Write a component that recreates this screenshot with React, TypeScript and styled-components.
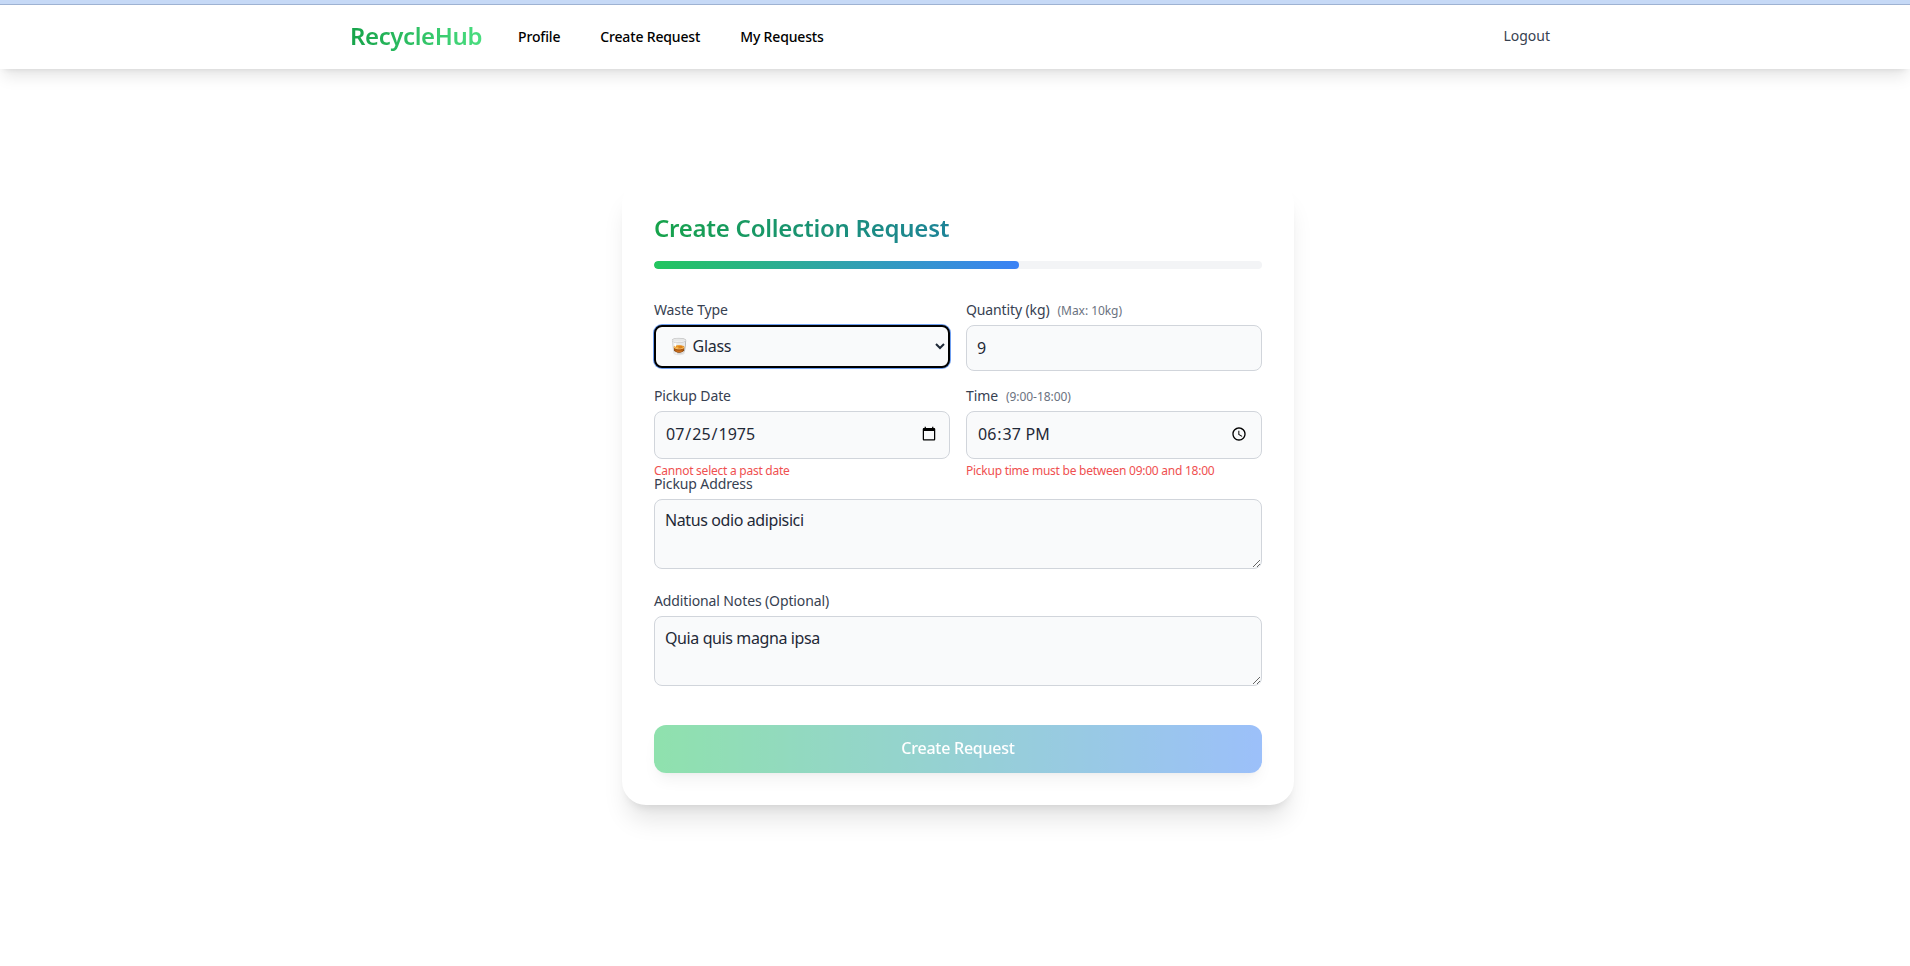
import React from "react";
import styled, { createGlobalStyle } from "styled-components";

const FONT = `"Noto Sans", "Open Sans", sans-serif`;

const Global = createGlobalStyle`
  html, body { margin: 0; padding: 0; background: #fff; }
  body { font-family: ${FONT}; color: #1f2937; }
  * { box-sizing: border-box; }
`;

const Page = styled.div`
  min-height: 966px;
  display: flex;
  flex-direction: column;
  overflow: hidden;
`;
const TopStrip = styled.div`
  height: 5px;
  background: #c6d9f6;
  border-bottom: 1px solid #9fb3d3;
`;
const Navbar = styled.nav`
  height: 64px;
  background: #fff;
  box-shadow: 0 10px 15px -3px rgba(0,0,0,.1), 0 4px 6px -4px rgba(0,0,0,.1);
  position: relative;
  z-index: 1;
`;
const NavInner = styled.div`
  width: 1280px;
  height: 100%;
  margin: 0 auto;
  padding: 0 33px 0 35px;
  display: flex;
  align-items: center;
`;
const Logo = styled.div`
  font-size: 24px;
  font-weight: 600;
  line-height: 30px;
  padding-bottom: 2px;
  letter-spacing: -0.4px;
  background: linear-gradient(90deg, #16a34a, #4ade80);
  -webkit-background-clip: text;
  background-clip: text;
  color: transparent;
  margin-right: 16px;
`;
const NavLink = styled.a`
  font-size: 14px;
  font-weight: 500;
  letter-spacing: -0.16px;
  color: #000;
  padding: 7px 12px 9px;
  margin: 0 8px;
`;
const Logout = styled.a`
  margin-left: auto;
  font-size: 14px;
  font-weight: 400;
  color: #374151;
  padding: 5px 12px 9px;
`;
const Main = styled.main`
  display: flex;
  justify-content: center;
  padding: 111px 0 0 6px;
`;
const Card = styled.form`
  width: 672px;
  height: 625px;
  padding: 32px;
  background: #fff;
  border-radius: 24px;
  box-shadow: 0 20px 25px -5px rgba(0,0,0,.1), 0 8px 10px -6px rgba(0,0,0,.1);
`;
const Title = styled.h1`
  margin: 0 0 17px;
  font-size: 24px;
  line-height: 32px;
  font-weight: 600;
  letter-spacing: -0.25px;
  background: linear-gradient(90deg, #16a34a, #2563eb);
  -webkit-background-clip: text;
  background-clip: text;
  color: transparent;
`;
const Progress = styled.div`
  height: 8px;
  border-radius: 999px;
  background: #f3f4f6;
  margin-bottom: 32px;
  overflow: hidden;
`;
const ProgressFill = styled.div`
  height: 100%;
  border-radius: 999px;
  background: linear-gradient(90deg, #22c55e, #3b82f6);
`;
const Row = styled.div`
  display: grid;
  grid-template-columns: 1fr 1fr;
  gap: 16px;
  margin-bottom: 16px;
`;
const Field = styled.div`
  position: relative;
  padding-bottom: ${p => p.$pb ?? 0}px;
`;
const Label = styled.label`
  display: block;
  height: 20px;
  margin-bottom: 4px;
  font-size: 14px;
  line-height: 18px;
  font-weight: 400;
  letter-spacing: -0.12px;
  color: #374151;
`;
const Hint = styled.span`
  font-size: 12px;
  font-weight: 400;
  letter-spacing: -0.05px;
  color: #6b7280;
  margin-left: 8px;
`;
const controlBase = `
  display: block;
  width: 100%;
  font-family: ${FONT};
  font-size: 16px;
  color: #1f2937;
  background: #f9fafb;
  border: 1px solid #d1d5db;
  border-radius: 8px;
  padding: 8px;
`;
const Select = styled.select`
  ${controlBase}
  height: 43px;
  margin-bottom: 3px;
  padding: 6px 9px 8px;
  letter-spacing: -0.3px;
  border: 2px solid #000;
  box-shadow: 0 0 0 1px #6f9ff0;
  outline: none;
`;
const Input = styled.input`
  ${controlBase}
  height: ${p => p.$h}px;
  padding: ${p => (p.$h === 48 ? "7px 10px 9px" : "8px 10px")};
`;
const TextArea = styled.textarea`
  ${controlBase}
  height: 70px;
  padding: ${p => p.$pt ?? 9}px 10px 9px;
  letter-spacing: -0.4px;
`;
const ErrorText = styled.p`
  position: absolute;
  left: 0;
  top: 100%;
  margin: 4px 0 0;
  font-size: 12px;
  line-height: 16px;
  letter-spacing: -0.25px;
  color: #ef5050;
`;
const Submit = styled.button`
  display: block;
  width: 100%;
  height: 48px;
  margin-top: 34px;
  padding: 0 0 2px;
  border: 0;
  border-radius: 12px;
  font-family: ${FONT};
  font-size: 16px;
  font-weight: 500;
  letter-spacing: -0.25px;
  color: #fff;
  background: linear-gradient(90deg, #22c55e, #3b82f6);
  opacity: .5;
  box-shadow: 0 10px 15px -3px rgba(0,0,0,.1), 0 4px 6px -4px rgba(0,0,0,.1);
`;

export default function App() {
  return (
    <Page>
      <Global />
      <TopStrip />
      <Navbar>
        <NavInner>
          <Logo>RecycleHub</Logo>
          <NavLink>Profile</NavLink>
          <NavLink>Create Request</NavLink>
          <NavLink>My Requests</NavLink>
          <Logout>Logout</Logout>
        </NavInner>
      </Navbar>
      <Main>
        <Card onSubmit={e => e.preventDefault()}>
          <Title>Create Collection Request</Title>
          <Progress><ProgressFill style={{ width: "60%" }} /></Progress>
          <Row>
            <Field>
              <Label>Waste Type</Label>
              <Select defaultValue="glass">
                <option value="glass">🥃 Glass</option>
              </Select>
            </Field>
            <Field>
              <Label>Quantity (kg)<Hint>(Max: 10kg)</Hint></Label>
              <Input $h={46} type="number" defaultValue={9} />
            </Field>
          </Row>
          <Row>
            <Field>
              <Label>Pickup Date</Label>
              <Input $h={48} type="date" defaultValue="1975-07-25" />
              <ErrorText>Cannot select a past date</ErrorText>
            </Field>
            <Field>
              <Label>Time<Hint>(9:00-18:00)</Hint></Label>
              <Input $h={48} type="time" defaultValue="18:37" />
              <ErrorText>Pickup time must be between 09:00 and 18:00</ErrorText>
            </Field>
          </Row>
          <Field $pb={23}>
            <Label>Pickup Address</Label>
            <TextArea defaultValue="Natus odio adipisici" />
          </Field>
          <Field $pb={5}>
            <Label>Additional Notes (Optional)</Label>
            <TextArea $pt={10} defaultValue="Quia quis magna ipsa" />
          </Field>
          <Submit type="button">Create Request</Submit>
        </Card>
      </Main>
    </Page>
  );
}
